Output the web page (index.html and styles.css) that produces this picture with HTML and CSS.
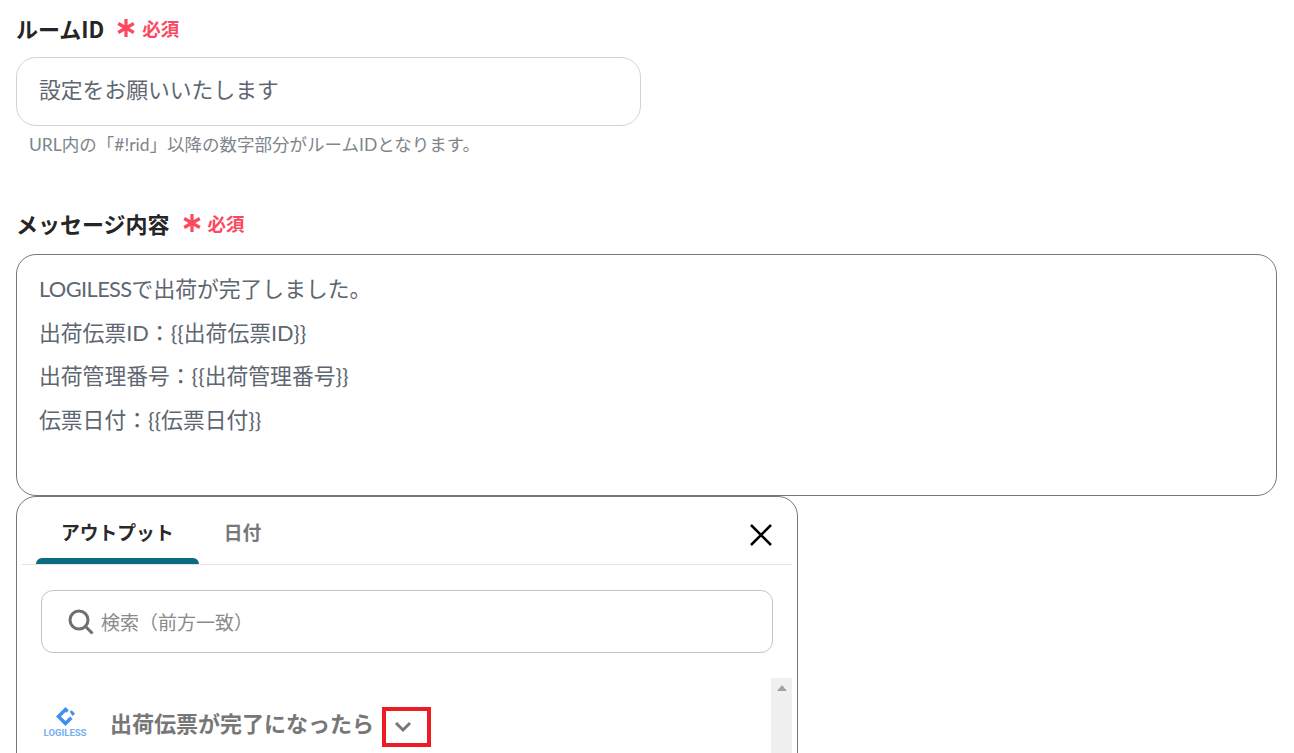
FILE: index.html
```html
<!DOCTYPE html>
<html lang="ja">
<head>
  <meta charset="UTF-8">
  <title>メッセージ設定</title>
  <link rel="stylesheet" href="styles.css">
</head>
<body>
  <div class="field room-field">
    <div class="label-row">
      <span class="label">ルームID</span>
      <span class="required"><svg class="star" viewBox="0 0 18 18"><path d="M9 0v18M1.200 4.500l15.600 9M16.800 4.500l-15.600 9"/></svg>必須</span>
    </div>
    <div class="text-input">設定をお願いいたします</div>
    <p class="hint">URL内の「#!rid」以降の数字部分がルームIDとなります。</p>
  </div>

  <div class="field message-field">
    <div class="label-row">
      <span class="label">メッセージ内容</span>
      <span class="required"><svg class="star" viewBox="0 0 18 18"><path d="M9 0v18M1.200 4.500l15.600 9M16.800 4.500l-15.600 9"/></svg>必須</span>
    </div>
    <div class="message-box">
      <p><span class="brand">LOGILESS</span>で出荷が完了しました。</p>
      <p>出荷伝票ID：{{出荷伝票ID}}</p>
      <p>出荷管理番号：{{出荷管理番号}}</p>
      <p>伝票日付：{{伝票日付}}</p>
    </div>

    <div class="panel">
      <div class="tabs">
        <div class="tab active">アウトプット</div>
        <div class="tab">日付</div>
        <svg class="close" viewBox="0 0 24 24"><path d="M2 2l20 20M22 2L2 22"/></svg>
      </div>
      <div class="search">
        <svg class="search-icon" viewBox="0 0 26 26"><circle cx="11" cy="11" r="9"/><path d="M17.500 17.500l7 7"/></svg>
        <span>検索（前方一致）</span>
      </div>
      <div class="list">
        <div class="list-item">
          <div class="logo">
            <svg viewBox="0 0 20 20"><path class="logo-mark" d="M10 0l3.500 3.500-2.600 2.600L10 5.200 5.200 10 10 14.800l4.800-4.800 2.600 2.600L10 20 0 10z"/><path class="logo-mark" d="M14.500 5l2-1.500L20 7l-2.500 2.500z"/></svg>
            <span>LOGILESS</span>
          </div>
          <span class="item-title">出荷伝票が完了になったら</span>
          <span class="chevron-box">
            <svg viewBox="0 0 18 12"><path d="M2 2l7 7 7-7"/></svg>
          </span>
        </div>
        <div class="scrollbar"><span class="arrow"></span></div>
      </div>
    </div>
  </div>
</body>
</html>
```

FILE: styles.css
```css
* {
  margin: 0;
  padding: 0;
  box-sizing: border-box;
}
html, body {
  height: 753px;
  overflow: hidden;
}
body {
  font-family: "Noto Sans CJK JP", "Noto Sans", sans-serif;
  background: #fff;
  color: #333;
  padding: 13px 17px 0 16px;
}
.room-field {
  margin-bottom: 51px;
}
.label-row {
  display: flex;
  align-items: center;
  height: 30px;
  margin-bottom: 14px;
}
.message-field .label-row {
  margin-bottom: 16px;
}
.label {
  font-size: 22px;
  font-weight: 700;
  color: #252525;
  line-height: 30px;
}
.required {
  display: flex;
  align-items: center;
  margin-left: 13px;
  font-size: 18.500px;
  font-weight: 700;
  color: #fb4a5f;
}
.star {
  width: 18px;
  height: 18px;
  margin-right: 7px;
  fill: none;
  stroke: #fb4a5f;
  stroke-width: 3.200;
}
.text-input {
  width: 625px;
  height: 69px;
  padding: 0 22px;
  border: 1px solid #cfd3dc;
  border-radius: 20px;
  font-family: Lato, "Noto Sans CJK JP", sans-serif;
  font-size: 21.800px;
  line-height: 63px;
  color: #5e6670;
}
.hint {
  margin: 7px 0 0 13px;
  font-family: Lato, "Noto Sans CJK JP", sans-serif;
  font-size: 17.500px;
  line-height: 24px;
  color: #7e858c;
}
.message-box {
  height: 242px;
  padding: 12px 22px;
  border: 1px solid #777;
  border-radius: 20px;
  font-family: Lato, "Noto Sans CJK JP", sans-serif;
  font-size: 21.800px;
  line-height: 43.600px;
  color: #5e6670;
}
.brand {
  letter-spacing: -0.600px;
}
.panel {
  width: 782px;
  height: 300px;
  padding: 0 5px;
  background: #fff;
  border: 1px solid #777;
  border-radius: 20px;
}
.tabs {
  display: flex;
  align-items: flex-start;
  height: 68px;
  padding-left: 14px;
  border-bottom: 1px solid #e3e3e3;
}
.tab {
  position: relative;
  height: 67px;
  padding: 20px 25px 0;
  font-size: 18.800px;
  font-weight: 700;
  line-height: 30px;
  color: #777;
}
.tab.active {
  color: #2a2a2a;
}
.tab.active::after {
  content: "";
  position: absolute;
  left: 0;
  right: 0;
  bottom: 0;
  height: 6px;
  background: #0b6a84;
  border-radius: 6px 6px 0 0;
}
.close {
  width: 24px;
  height: 24px;
  margin: 26px 19px 0 auto;
  fill: none;
  stroke: #000;
  stroke-width: 2.500;
}
.search {
  display: flex;
  align-items: center;
  height: 63px;
  margin: 25px 19px 0;
  padding-left: 26px;
  border: 1px solid #c4c4c4;
  border-radius: 12px;
  font-size: 19px;
  color: #8a8a8a;
}
.search-icon {
  width: 26px;
  height: 26px;
  margin-right: 7px;
  fill: none;
  stroke: #6f6f6f;
  stroke-width: 3;
}
.list {
  position: relative;
  height: 120px;
  margin-top: 25px;
}
.list-item {
  display: flex;
  align-items: center;
  height: 88px;
  padding-left: 23px;
}
.logo {
  display: flex;
  flex-direction: column;
  align-items: center;
  width: 40px;
  margin-right: 25px;
  font-family: Roboto, sans-serif;
  font-size: 9.500px;
  font-weight: 700;
  line-height: 11px;
  color: #74b0f0;
}
.logo svg {
  width: 19px;
  height: 19px;
  margin-bottom: 1px;
}
.logo-mark {
  fill: #3f8ff0;
}
.item-title {
  font-size: 22px;
  font-weight: 700;
  color: #777;
}
.chevron-box {
  position: absolute;
  left: 360px;
  top: 29px;
  display: flex;
  align-items: center;
  justify-content: center;
  width: 49px;
  height: 40px;
  padding-right: 8px;
  border: 4px solid #ed1c24;
}
.chevron-box svg {
  width: 18px;
  height: 12px;
  fill: none;
  stroke: #777;
  stroke-width: 3;
}
.scrollbar {
  position: absolute;
  right: 0;
  top: 0;
  bottom: 0;
  width: 21px;
  background: #f0f0f0;
}
.arrow {
  position: absolute;
  left: 6px;
  top: 7px;
  border-left: 5px solid transparent;
  border-right: 5px solid transparent;
  border-bottom: 6px solid #a3a3a3;
}
```
